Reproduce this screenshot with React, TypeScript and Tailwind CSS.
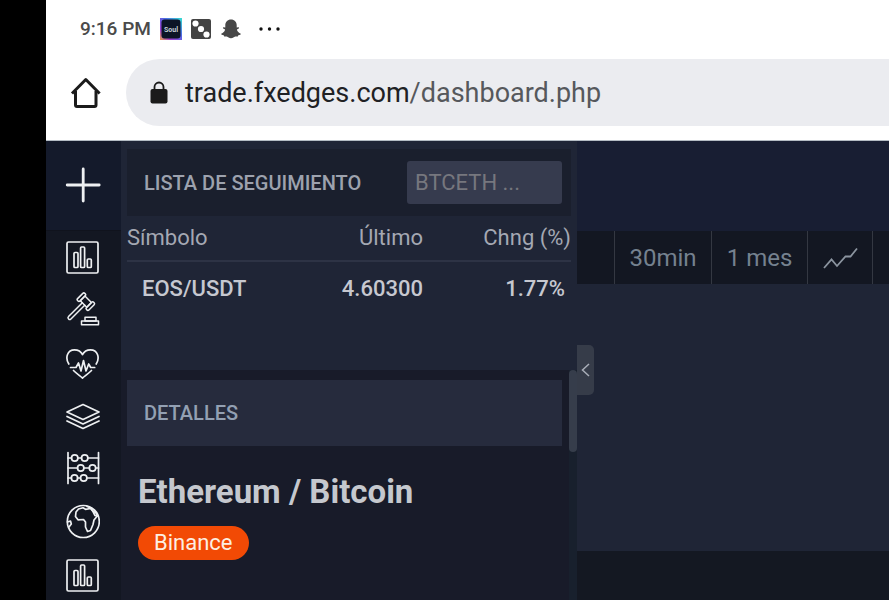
import React from 'react';

const outline = {
  width: 36,
  height: 36,
  viewBox: '0 0 36 36',
  fill: 'none',
  stroke: 'currentColor',
  strokeWidth: 1.7,
  strokeLinejoin: 'round' as const,
  strokeLinecap: 'round' as const,
  'aria-hidden': true,
};

const ChartIcon = () => (
  <svg {...outline}>
    <rect x="3" y="3" width="31" height="31" rx="1.5" />
    <rect x="10" y="13.5" width="4" height="15" rx="1" />
    <rect x="16.6" y="8" width="4" height="20.5" rx="1" />
    <rect x="23.3" y="20" width="4" height="8.5" rx="1" />
  </svg>
);

const GavelIcon = () => (
  <svg {...outline} strokeWidth="1.5">
    <g transform="rotate(45 22 9.5)">
      <rect x="17.4" y="6.4" width="9.200" height="6.600" />
      <rect x="14" y="4.600" width="3.400" height="10.200" rx="1.400" />
      <rect x="26.600" y="4.600" width="3.400" height="10.200" rx="1.400" />
      <path d="M20.300 13v19.500a1.700 1.700 0 0 0 3.400 0V13" />
    </g>
    <rect x="17.500" y="29" width="17" height="3.800" />
    <rect x="21" y="25.200" width="11" height="3.800" />
  </svg>
);

const HeartIcon = () => (
  <svg {...outline}>
    <path d="M4.800 19C.8 12.500 3.500 4.800 10.500 4.800c4 0 6.500 1.700 8 4.700 1.500-3 4-4.700 8-4.700 7 0 9.700 7.700 5.700 14.200" />
    <path d="M9.500 25.500c3 3 6 5 9 7.500 3-2.500 6-4.500 9-7.500" />
    <path d="M6.500 22.500H12l2.500-4.500 2.500 8 2.500-10.500 2.500 10.500 2.700-7 2 3.500h4" />
  </svg>
);

const LayersIcon = () => (
  <svg {...outline}>
    <path d="M19 6.500 35 14l-16 7.500L3 14z" />
    <path d="m3 18.500 16 7.500 16-7.500" />
    <path d="m3 23 16 7.500L35 23" />
  </svg>
);

const AbacusIcon = () => (
  <svg {...outline}>
    <path d="M4 1.500v31M34.500 1.500v31" />
    <path d="M4 7h3.500M14 7h3.500M24 7h10.500M4 17h9.500M20 17h5.500M32 17h2.500M4 27h3.500M13.500 27h3M23 27h11.500" />
    <circle cx="10.700" cy="7" r="3.200" />
    <circle cx="20.700" cy="7" r="3.200" />
    <circle cx="16.700" cy="17" r="3.200" />
    <circle cx="28.500" cy="17" r="3.200" />
    <circle cx="10.500" cy="27" r="3.200" />
    <circle cx="19.700" cy="27" r="3.200" />
  </svg>
);

// Globe turned towards Africa
const GlobeIcon = () => (
  <svg {...outline}>
    <circle cx="19.300" cy="17.500" r="16" />
    <path d="M14.500 5 19 3.800l2.500 1.500 5-.8 2.500 3 2 4 2.500.3-3.500 4.200-1 4.500-2.500 6-3 1-2-4.500v-5l-2-2.500-5.500.3-2.500-3.300.5-4.500z" />
    <path d="M23 2.500l4 1.500 2 3 3 2 1.500 3M3.500 18l3-1 .8 3-2.300 3" />
  </svg>
);

const tools = [
  { label: 'Gráficos', icon: ChartIcon },
  { label: 'Subastas', icon: GavelIcon },
  { label: 'Salud', icon: HeartIcon },
  { label: 'Capas', icon: LayersIcon },
  { label: 'Calculadora', icon: AbacusIcon },
  { label: 'Mercados', icon: GlobeIcon },
  { label: 'Estadísticas', icon: ChartIcon },
];

const quotes = [{ symbol: 'EOS/USDT', last: '4.60300', change: '1.77%' }];

function StatusBar() {
  return (
    <div className="flex h-[59px] items-center pb-0.5 pl-[34px] text-[#4a4a4a]">
      <span className="text-[19px] font-medium leading-6">9:16 PM</span>
      <svg className="ml-[9px] shrink-0" width="22" height="22" viewBox="0 0 22 22" aria-hidden="true">
        <defs>
          <linearGradient id="soul" x1="0" y1="1" x2="1" y2="0">
            <stop offset="0" stopColor="#e8a24e" />
            <stop offset=".25" stopColor="#a13fd0" />
            <stop offset=".6" stopColor="#4f6be8" />
            <stop offset="1" stopColor="#35e0d0" />
          </linearGradient>
        </defs>
        <rect width="22" height="22" fill="url(#soul)" />
        <rect x="1.500" y="1.500" width="19" height="19" rx="3" fill="#0c1526" />
        <text x="11" y="14" textAnchor="middle" fontSize="7" fontWeight="700" fill="#c5d0d6">Soul</text>
      </svg>
      <svg className="ml-2 shrink-0" width="22" height="22" viewBox="0 0 22 22" aria-hidden="true">
        <rect x="1" y="1" width="20" height="20" rx="2" fill="#434343" />
        <g fill="#fff">
          <circle cx="5.500" cy="5.500" r="3.100" />
          <circle cx="11" cy="11" r="3.100" />
          <circle cx="16.500" cy="16.500" r="3.100" />
        </g>
      </svg>
      <svg className="ml-2 shrink-0" width="22" height="22" viewBox="0 0 22 22" fill="#474747" aria-hidden="true">
        <path d="M11 1.500c3.500 0 5.700 2.500 5.700 5.800v2.200l1.800-.2c.8.200.8 1-.1 1.500l-1.500.8c.4 2 1.900 3.500 3.900 4.100.3.900-1 1.300-2.500 1.500l-.5 1.300-2.600-.1c-1.300.5-2.200 1.800-4.200 1.800s-2.900-1.300-4.200-1.800l-2.600.1-.5-1.300c-1.500-.2-2.800-.6-2.500-1.500 2-.6 3.500-2.100 3.900-4.100l-1.500-.8c-.9-.5-.9-1.300-.1-1.500l1.800.2V7.300c0-3.300 2.200-5.800 5.700-5.800z" />
      </svg>
      <svg className="ml-4 shrink-0" width="24" height="22" viewBox="0 0 24 22" fill="#111" aria-hidden="true">
        <circle cx="3" cy="11" r="1.700" />
        <circle cx="11.500" cy="11" r="1.700" />
        <circle cx="20" cy="11" r="1.700" />
      </svg>
    </div>
  );
}

function AddressBar() {
  return (
    <div className="flex items-center pb-[14px] pl-6">
      <button type="button" aria-label="Inicio" className="shrink-0 text-[#1b1b1b]">
        <svg width="32" height="32" viewBox="0 0 32 32" fill="none" stroke="currentColor" strokeWidth="3" strokeLinejoin="round" aria-hidden="true">
          <path d="M2 16.500 15.800 2.500l13.800 14" />
          <path d="M5.500 14v14q0 1.500 1.500 1.500h17.500q1.500 0 1.500-1.500V14" />
        </svg>
      </button>
      <button
        type="button"
        className="ml-6 flex h-[67px] flex-1 items-center rounded-l-full bg-[#ebecf0] pl-6 text-left text-[27px] leading-8"
      >
        <svg className="mr-[17px] shrink-0" width="18" height="24" viewBox="0 0 18 24" aria-hidden="true">
          <path d="M4.500 9V6a4.500 4.500 0 0 1 9 0v3" fill="none" stroke="#1b1b1b" strokeWidth="1.800" />
          <rect x="0.500" y="8" width="17" height="14.500" rx="2" fill="#1b1b1b" />
        </svg>
        <span className="text-[#202124]">trade.fxedges.com</span>
        <span className="text-[#56585c]">/dashboard.php</span>
      </button>
    </div>
  );
}

function Sidebar() {
  return (
    <nav className="flex w-[75px] shrink-0 flex-col bg-[#131722] text-[#eef0f2]">
      <button type="button" aria-label="Añadir" className="flex h-[90px] items-center border-b border-[#10131d] bg-[#141a2b] pl-[18px]">
        <svg width="38" height="38" viewBox="0 0 38 38" stroke="currentColor" strokeWidth="2.800" strokeLinecap="round" aria-hidden="true">
          <path d="M19.200 2v32M3.200 18h32" />
        </svg>
      </button>
      <div className="flex flex-col items-start gap-[17px] pl-[18px] pt-2">
        {tools.map(({ label, icon: Icon }) => (
          <button key={label} type="button" aria-label={label}>
            <Icon />
          </button>
        ))}
      </div>
    </nav>
  );
}

function Watchlist() {
  return (
    <section className="h-[229px] bg-[#1f2536] px-[6px] pt-2">
      <div className="flex h-[67px] items-center justify-between bg-[#1a1f2d] pl-[17px] pr-[9px]">
        <h2 className="text-xl font-medium leading-6 text-[#9da2ae]">LISTA DE SEGUIMIENTO</h2>
        <input
          type="text"
          aria-label="Buscar símbolo"
          placeholder="BTCETH ..."
          className="h-[43px] w-[155px] rounded-[3px] bg-[#363b4e] px-2 text-[22px] text-gray-200 outline-none placeholder:text-[#76777e]"
        />
      </div>
      <table className="w-full table-fixed text-[22px] leading-7">
        <thead>
          <tr className="h-[45px] border-b-2 border-[#2d3345] text-[#a4a8b3]">
            <th className="w-1/3 text-left font-normal">Símbolo</th>
            <th className="w-1/3 text-right font-normal">Último</th>
            <th className="w-1/3 text-right font-normal">Chng (%)</th>
          </tr>
        </thead>
        <tbody>
          {quotes.map((q) => (
            <tr key={q.symbol} className="h-[55px] font-medium text-[#c6c8d0]">
              <td className="pl-[15px]">{q.symbol}</td>
              <td className="text-right">{q.last}</td>
              <td className="pr-[6px] text-right">{q.change}</td>
            </tr>
          ))}
        </tbody>
      </table>
    </section>
  );
}

function Details() {
  return (
    <section className="flex flex-1 bg-[#181b29]">
      <div className="flex-1 pl-[6px] pr-[7px] pt-[10px]">
        <div className="flex h-[66px] items-center bg-[#262b3d] pl-[17px]">
          <h2 className="text-xl font-medium leading-6 text-[#93a0b3]">DETALLES</h2>
        </div>
        <div className="flex flex-col items-start pl-[11px] pt-[26px]">
          <h1 className="text-[33px] font-bold leading-10 text-[#c5c8ce]">Ethereum / Bitcoin</h1>
          <span className="mt-[14px] rounded-full bg-[#f24a05] px-4 text-[22px] leading-[34px] text-[#fdeee2]">Binance</span>
        </div>
      </div>
      <div className="w-2 bg-[#18202d]">
        <div className="h-[82px] rounded-full bg-[#363d4b]" />
      </div>
    </section>
  );
}

function ChartArea() {
  return (
    <main className="flex min-w-0 flex-1 flex-col bg-[#141822]">
      <div className="h-[90px] bg-[#181e33]" />
      <div className="flex h-[53px] overflow-hidden bg-[#131722] pl-[37px] text-2xl text-[#75818f]">
        <button type="button" className="w-[97px] shrink-0 border-l border-[#343842]">30min</button>
        <button type="button" className="w-24 shrink-0 border-l border-[#343842]">1 mes</button>
        <button type="button" aria-label="Tipo de gráfico" className="flex w-[66px] shrink-0 items-center justify-center border-x border-[#343842]">
          <svg width="36" height="24" viewBox="0 0 36 24" fill="none" stroke="#8b949f" strokeWidth="1.800" aria-hidden="true">
            <path d="m2 22 7.500-8.500 5.500 6.500 8.500-9.500h5L35 2.500" />
          </svg>
        </button>
      </div>
      <div className="flex h-[267px] items-start bg-[#1f2536] pt-[61px]">
        <button type="button" aria-label="Ocultar panel" className="flex h-[50px] w-[17px] items-center justify-center rounded-r-[5px] bg-[#363c49] text-[#a9aeb8]">
          <svg width="9" height="14" viewBox="0 0 9 14" fill="none" stroke="currentColor" strokeWidth="1.500" aria-hidden="true">
            <path d="M8 1 1.500 7 8 13" />
          </svg>
        </button>
      </div>
    </main>
  );
}

export default function App() {
  return (
    <div className="flex min-h-screen flex-col overflow-hidden bg-black pl-[46px] font-['Roboto','Liberation_Sans',sans-serif]">
      <header className="border-b border-[#b4bcc4] bg-white">
        <StatusBar />
        <AddressBar />
      </header>
      <div className="flex flex-1">
        <Sidebar />
        <div className="flex w-[456px] shrink-0 flex-col">
          <Watchlist />
          <Details />
        </div>
        <ChartArea />
      </div>
    </div>
  );
}
